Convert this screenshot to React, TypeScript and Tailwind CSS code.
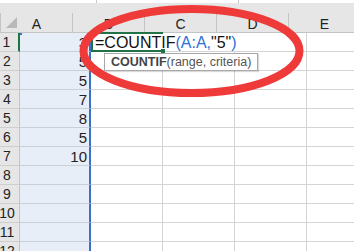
import React from "react";

const values = ["3", "5", "5", "7", "8", "5", "10", "", "", "", "", ""];

const font = { fontFamily: '"Liberation Sans", Arial, sans-serif' };

const Corner = () => (
  <div className="relative w-[20px] h-[19px] border-r border-[#c4c4c4]">
    <svg className="absolute left-[6px] top-[4px]" width="11" height="11" viewBox="0 0 11 11">
      <polygon points="11,0 11,11 0,11" fill="#b9b9b9" />
    </svg>
  </div>
);

const HeadCell = ({ label, w }: { label: string; w: string }) => (
  <div className={`${w} h-[19px] shrink-0 border-r border-[#c4c4c4] flex items-center justify-center pt-[4px] text-[14px] text-[#222]`}>
    {label}
  </div>
);

const App = () => {
  return (
    <div className="relative w-[354px] h-[251px] overflow-hidden bg-white" style={font}>
      <div className="h-[3px] bg-white flex">
        <div className="w-[97px] shrink-0 border-r border-[#c8c8c8]" />
        <div className="w-[142px] shrink-0 border-r border-[#c8c8c8]" />
      </div>
      <div className="h-[30px] bg-[#e6e6e6] border-b border-[#c4c4c4] flex items-end">
        <Corner />
        <HeadCell label="A" w="w-[72px]" />
        <HeadCell label="B" w="w-[72px]" />
        <HeadCell label="C" w="w-[72px]" />
        <HeadCell label="D" w="w-[72px]" />
        <HeadCell label="E" w="w-[72px]" />
      </div>
      {values.map((v, i) => (
        <div key={i} className="flex h-[19px]">
          <div
            className={`w-[20px] shrink-0 bg-[#e6e6e6] border-b border-[#cfcfcf] border-r ${
              i === 0 ? "border-r-2 border-r-[#217346]" : "border-r-[#c4c4c4]"
            } pr-[5px] flex items-center justify-center text-[14px] text-[#222] leading-none`}
          >
            {i + 1}
          </div>
          <div className="relative w-[71px] shrink-0 bg-[#e8eef8] border-b border-[#cbd0d8] border-r-2 border-r-[#3c6fc6] flex items-center justify-end pr-[2px] text-[15px] text-[#222] leading-none">
            {i === 0 && <span className="absolute left-0 top-0 w-[2px] h-[2px] bg-[#3c6fc6]" />}
            {v}
          </div>
          {i === 0 ? (
            <>
              <div className="relative w-[72px] shrink-0 border-t-2 border-l-2 border-b-2 border-[#217346] -mt-px">
                <span className="absolute -right-[2px] -bottom-[3px] w-[4px] h-[4px] bg-[#217346]" />
                <span className="absolute left-[2px] top-0 whitespace-nowrap text-[16px] leading-[17px]">
                  <span className="text-[#111]">=COUNTIF</span>
                  <span className="text-[#2f6fd6]">(A:A,</span>
                  <span className="text-[#111]">"5"</span>
                  <span className="text-[#2f6fd6]">)</span>
                </span>
              </div>
              <div className="w-[72px] shrink-0 border-b border-[#d4d4d4]" />
              <div className="w-[72px] shrink-0 border-b border-r border-[#d4d4d4]" />
              <div className="w-[72px] shrink-0 border-b border-r border-[#d4d4d4]" />
            </>
          ) : (
            <>
              <div className="w-[72px] shrink-0 border-b border-r border-[#d4d4d4]" />
              <div className="w-[72px] shrink-0 border-b border-r border-[#d4d4d4]" />
              <div className="w-[72px] shrink-0 border-b border-r border-[#d4d4d4]" />
              <div className="w-[72px] shrink-0 border-b border-r border-[#d4d4d4]" />
            </>
          )}
        </div>
      ))}

      <div className="absolute left-[104px] top-[53px] h-[18px] px-[6px] bg-white border border-[#a9a9a9] flex items-center whitespace-nowrap text-[12.5px] text-[#555] shadow-[1px_1px_1px_rgba(0,0,0,0.15)]">
        <span className="font-bold text-[#444]">COUNTIF</span>
        <span>(range, criteria)</span>
      </div>

      <svg className="absolute left-0 top-0 pointer-events-none" width="354" height="251" viewBox="0 0 354 251">
        <ellipse cx="191.5" cy="51" rx="108" ry="42" fill="none" stroke="#ef3a3a" strokeWidth="8" />
      </svg>
    </div>
  );
};

export default App;
